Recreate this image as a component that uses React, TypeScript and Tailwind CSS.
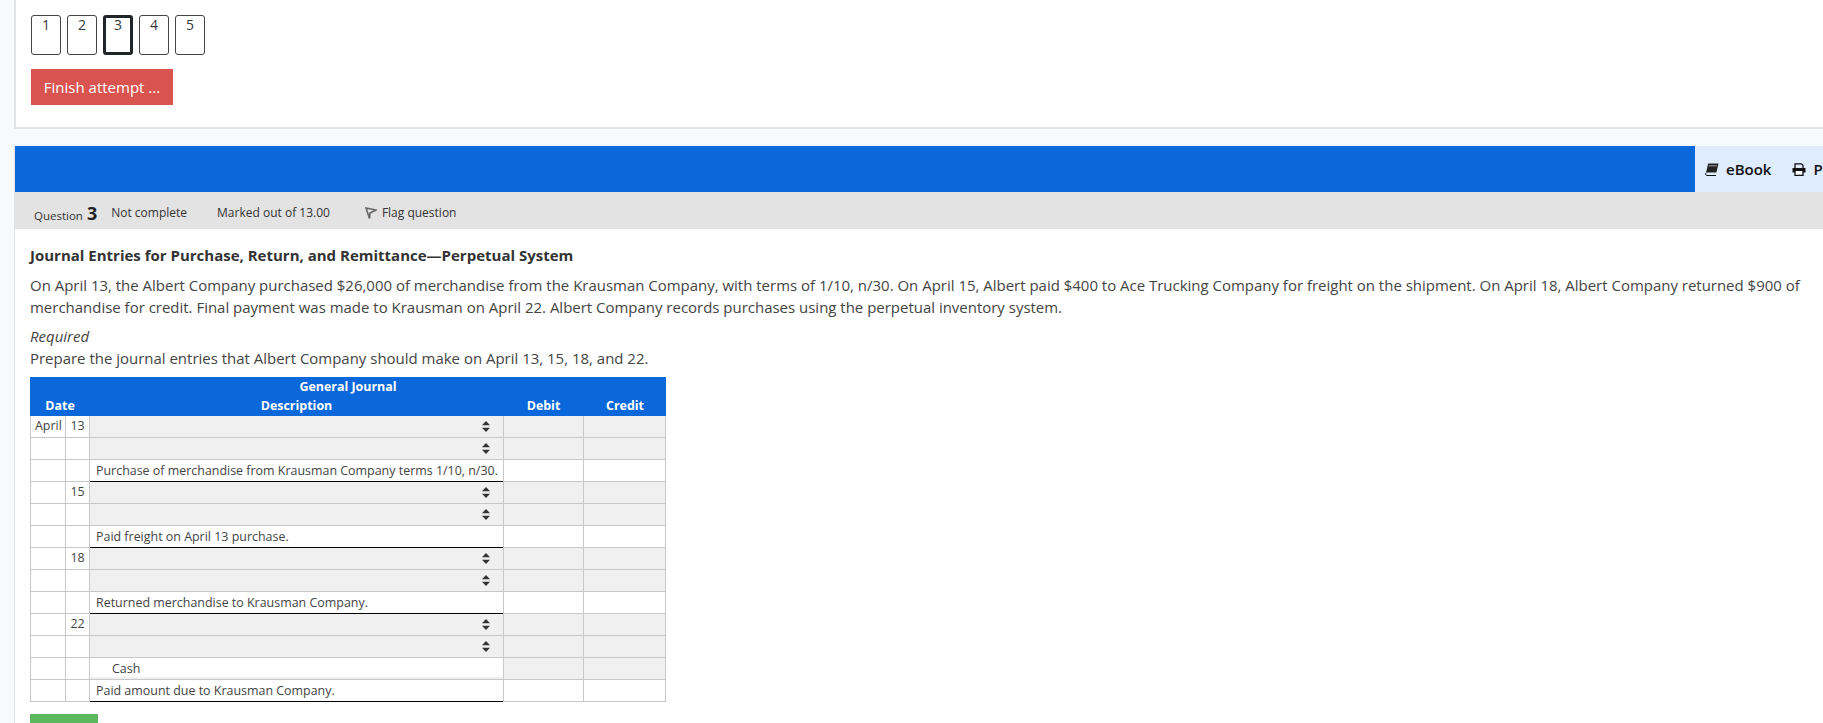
import React from 'react';

const QuestionButtons = [1, 2, 3, 4, 5];

const Arrows = () => (
  <svg width="8" height="11" viewBox="0 0 8 11" className="shrink-0">
    <path d="M4 0 L8 4.3 H0 Z M4 11 L0 6.7 H8 Z" fill="#333" />
  </svg>
);

type Row = {
  month?: string;
  day?: string;
  text?: string;
  indent?: boolean;
  select?: boolean;
  last?: boolean;
  debitGray?: boolean;
};

const rows: Row[] = [
  { month: 'April', day: '13', select: true, debitGray: true },
  { select: true, debitGray: true },
  { text: 'Purchase of merchandise from Krausman Company terms 1/10, n/30.', last: true },
  { day: '15', select: true, debitGray: true },
  { select: true, debitGray: true },
  { text: 'Paid freight on April 13 purchase.', last: true },
  { day: '18', select: true, debitGray: true },
  { select: true, debitGray: true },
  { text: 'Returned merchandise to Krausman Company.', last: true },
  { day: '22', select: true, debitGray: true },
  { select: true, debitGray: true },
  { text: 'Cash', indent: true, debitGray: true },
  { text: 'Paid amount due to Krausman Company.', last: true },
];

export default function App() {
  return (
    <div className="h-[723px] overflow-hidden bg-[#f8f9fa] pl-[14px] font-['Open_Sans',sans-serif] text-[#373a3c]">
      <div className="h-[129px] border-b-2 border-l-2 border-[#e3e3e3] bg-white pl-[15px] pt-[15px]">
        <div className="flex gap-[6px]">
          {QuestionButtons.map((n) => (
            <div
              key={n}
              className={`flex h-[40px] w-[30px] justify-center rounded-[3px] bg-white text-[14px] ${
                n === 3 ? 'border-[3px] border-[#212529] leading-[14px]' : 'border border-[#444] leading-[18px]'
              }`}
            >
              {n}
            </div>
          ))}
        </div>
        <div className="mt-[14px] flex h-[36px] w-[142px] items-center justify-center bg-[#d9534f] text-[15px] text-white">
          Finish attempt ...
        </div>
      </div>

      <div className="mt-[17px] h-full border-l border-[#e3e3e3] bg-white">
        <div className="flex h-[46px] justify-end bg-[#0a68da]">
          <div className="flex w-[128px] items-center gap-[21px] overflow-hidden whitespace-nowrap bg-[#dfecfd] pl-[10px] text-[15px] font-semibold text-[#111]">
            <span className="flex items-center gap-[7px]">
              <svg width="14" height="13" viewBox="0 0 14 13">
                <path d="M3.2 0.5 H13.5 L11.4 9.6 H1 Z" fill="#222" />
                <path d="M3.8 2 H12 L11.6 3.6 H3.4 Z" fill="#777" />
                <path d="M1 9.8 Q0.2 11 1 12 Q1.4 12.5 2 12.5 H11" fill="none" stroke="#111" strokeWidth="1" />
              </svg>
              eBook
            </span>
            <span className="flex items-center gap-[7px]">
              <svg width="14" height="13" viewBox="0 0 14 13">
                <path d="M3 5 V0.8 H9.5 L11 2.3 V5" fill="none" stroke="#111" strokeWidth="1.3" />
                <path d="M0.5 5 H13.5 V9.5 H0.5 Z" fill="#111" />
                <path d="M3 8 V12.3 H11 V8" fill="#fff" stroke="#111" strokeWidth="1.3" />
              </svg>
              Print
            </span>
          </div>
        </div>

        <div className="flex h-[37px] items-center whitespace-nowrap bg-[#e3e3e3] pl-[19px] pt-[5px] text-[12px] text-[#333]">
          <span className="flex items-baseline text-[11.5px]">
            Question <b className="ml-[4px] text-[18px] font-bold text-[#222]">3</b>
          </span>
          <span className="ml-[14px]">Not complete</span>
          <span className="ml-[30px]">Marked out of 13.00</span>
          <span className="ml-[35px] flex items-center gap-[5px]">
            <svg width="12" height="12" viewBox="0 0 12 12">
              <path d="M1 1 L11 3 L5 6 L4.5 11.5 Z" fill="none" stroke="#666" strokeWidth="1.6" />
            </svg>
            Flag question
          </span>
        </div>

        <div className="pl-[15px] pt-[16px]">
          <h2 className="text-[15px] font-bold leading-[20px] text-[#333]">
            Journal Entries for Purchase, Return, and Remittance—Perpetual System
          </h2>
          <p className="mt-[9px] w-[1790px] text-[14.98px] leading-[22px] text-[#444]">
            On April 13, the Albert Company purchased $26,000 of merchandise from the Krausman Company, with terms of 1/10, n/30. On April 15, Albert paid $400 to Ace Trucking Company for freight on the shipment. On April 18, Albert Company returned $900 of merchandise for credit. Final payment was made to Krausman on April 22. Albert Company records purchases using the perpetual inventory system.
          </p>
          <p className="mt-[7px] text-[14.98px] italic leading-[22px] text-[#444]">Required</p>
          <p className="text-[14.98px] leading-[22px] text-[#444]">
            Prepare the journal entries that Albert Company should make on April 13, 15, 18, and 22.
          </p>

          <div className="mt-[8px] w-[636px] text-[12.45px]">
            <div className="grid h-[39px] grid-cols-[60px_413px_81px_82px] content-start bg-[#0a68da] font-bold leading-[19px] text-white">
              <div className="col-span-4 text-center">General Journal</div>
              <div className="text-center">Date</div>
              <div className="text-center">Description</div>
              <div className="text-center">Debit</div>
              <div className="text-center">Credit</div>
            </div>
            {rows.map((r, i) => (
              <div key={i} className="grid h-[22px] grid-cols-[36px_24px_413px_81px_82px] text-[#444]">
                <div className="flex items-center border-b border-l border-r border-[#c8c8c8] pl-[4px] leading-none">{r.month}</div>
                <div className="flex items-center justify-center border-b border-r border-[#c8c8c8] leading-none">{r.day}</div>
                <div
                  className={`flex items-center justify-between border-b pr-[13px] leading-none ${
                    r.last ? 'border-black' : 'border-[#c8c8c8]'
                  } ${r.select ? 'bg-[#f0f0f0]' : ''} ${r.indent ? 'pl-[22px] shadow-[inset_0_-2px_0_#f0f0f0]' : 'pl-[6px]'}`}
                >
                  <span className="whitespace-nowrap pt-[1px]">{r.text}</span>
                  {r.select && <Arrows />}
                </div>
                <div className={`border-b border-l border-r border-[#c8c8c8] ${r.debitGray ? 'bg-[#f0f0f0]' : ''}`} />
                <div className={`border-b border-r border-[#c8c8c8] ${r.debitGray ? 'bg-[#f0f0f0]' : ''}`} />
              </div>
            ))}
          </div>

          <div className="mt-[12px] h-[30px] w-[68px] bg-[#5cb85c]" />
        </div>
      </div>
    </div>
  );
}
